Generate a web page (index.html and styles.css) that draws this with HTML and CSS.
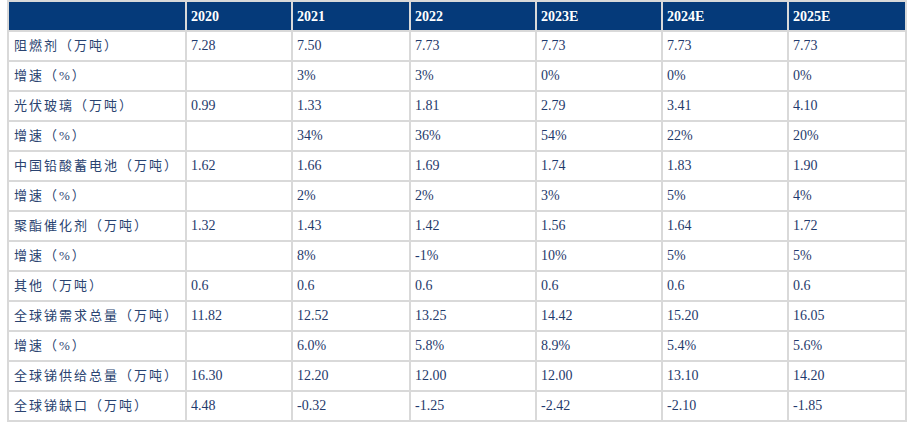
FILE: index.html
```html
<!DOCTYPE html>
<html lang="zh">
<head>
<meta charset="utf-8">
<link rel="stylesheet" href="styles.css">
</head>
<body>
<table class="data">
  <colgroup>
    <col class="c-label"><col class="c-104"><col class="c-116"><col class="c-124"><col class="c-124"><col class="c-124"><col class="c-116">
  </colgroup>
  <thead>
    <tr><th></th><th>2020</th><th>2021</th><th>2022</th><th>2023E</th><th>2024E</th><th>2025E</th></tr>
  </thead>
  <tbody>
    <tr><td class="label">阻燃剂（万吨）</td><td>7.28</td><td>7.50</td><td>7.73</td><td>7.73</td><td>7.73</td><td>7.73</td></tr>
    <tr><td class="label">增速（%）</td><td></td><td>3%</td><td>3%</td><td>0%</td><td>0%</td><td>0%</td></tr>
    <tr><td class="label">光伏玻璃（万吨）</td><td>0.99</td><td>1.33</td><td>1.81</td><td>2.79</td><td>3.41</td><td>4.10</td></tr>
    <tr><td class="label">增速（%）</td><td></td><td>34%</td><td>36%</td><td>54%</td><td>22%</td><td>20%</td></tr>
    <tr><td class="label">中国铅酸蓄电池（万吨）</td><td>1.62</td><td>1.66</td><td>1.69</td><td>1.74</td><td>1.83</td><td>1.90</td></tr>
    <tr><td class="label">增速（%）</td><td></td><td>2%</td><td>2%</td><td>3%</td><td>5%</td><td>4%</td></tr>
    <tr><td class="label">聚酯催化剂（万吨）</td><td>1.32</td><td>1.43</td><td>1.42</td><td>1.56</td><td>1.64</td><td>1.72</td></tr>
    <tr><td class="label">增速（%）</td><td></td><td>8%</td><td>-1%</td><td>10%</td><td>5%</td><td>5%</td></tr>
    <tr><td class="label">其他（万吨）</td><td>0.6</td><td>0.6</td><td>0.6</td><td>0.6</td><td>0.6</td><td>0.6</td></tr>
    <tr><td class="label">全球锑需求总量（万吨）</td><td>11.82</td><td>12.52</td><td>13.25</td><td>14.42</td><td>15.20</td><td>16.05</td></tr>
    <tr><td class="label">增速（%）</td><td></td><td>6.0%</td><td>5.8%</td><td>8.9%</td><td>5.4%</td><td>5.6%</td></tr>
    <tr><td class="label">全球锑供给总量（万吨）</td><td>16.30</td><td>12.20</td><td>12.00</td><td>12.00</td><td>13.10</td><td>14.20</td></tr>
    <tr><td class="label">全球锑缺口（万吨）</td><td>4.48</td><td>-0.32</td><td>-1.25</td><td>-2.42</td><td>-2.10</td><td>-1.85</td></tr>
  </tbody>
</table>
</body>
</html>
```
FILE: styles.css
```css
html, body {
  margin: 0;
  padding: 0;
  background: #ffffff;
}

.data {
  margin: 0 0 0 7px;
  border-collapse: separate;
  border-spacing: 2px;
  background: #d9d9d9;
  table-layout: fixed;
  width: 900px;
  font-family: "Liberation Serif", "Noto Sans CJK SC", serif;
  font-size: 14px;
  color: #1f3a6c;
}

.c-label { width: 176px; }
.c-104 { width: 104px; }
.c-116 { width: 116px; }
.c-124 { width: 124px; }

.data th,
.data td {
  box-sizing: border-box;
  height: 28px;
  padding: 0 4px;
  text-align: left;
  vertical-align: middle;
  white-space: nowrap;
  line-height: 16px;
}

.data th {
  background: #053a7a;
  color: #ffffff;
  font-weight: bold;
  padding-top: 2px;
}

.data td {
  background: #ffffff;
}

.data td.label {
  font-size: 13px;
  letter-spacing: 2px;
  text-spacing-trim: space-all;
  padding-left: 5px;
  color: #2a4370;
}
```
